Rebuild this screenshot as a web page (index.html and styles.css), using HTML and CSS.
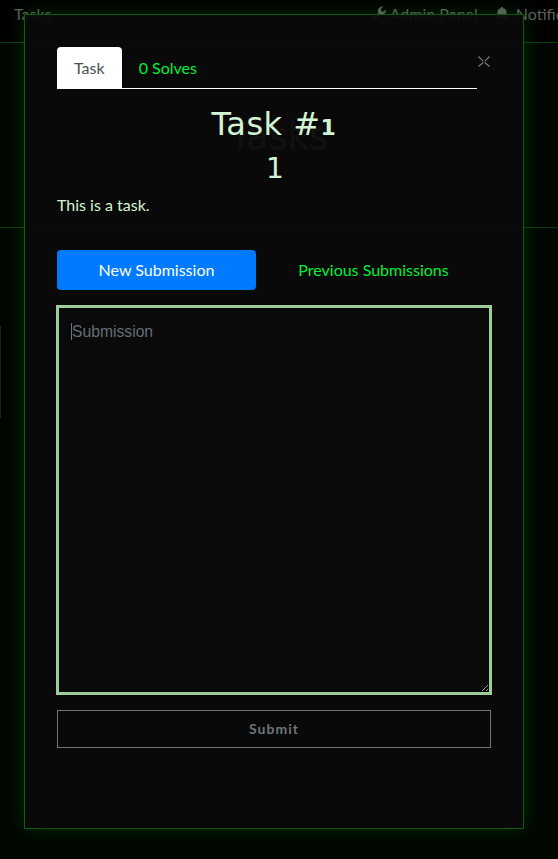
FILE: index.html
```html
<!DOCTYPE html>
<html lang="en">
<head>
    <meta charset="UTF-8">
    <title>Tasks</title>
    <link rel="stylesheet" href="styles.css">
</head>
<body>

    <nav class="navbar">
        <span class="nav-brand">Tasks</span>
        <span class="nav-links">
            <span class="nav-link">
                <svg class="nav-icon" viewBox="0 0 16 16"><path d="M15 4.500a4.200 4.200 0 0 1-5.600 4L4 14.600a1.700 1.700 0 0 1-2.600-2.300L7.400 6.700A4.200 4.200 0 0 1 12.200.700L9.800 3.200l.5 2.100 2.100.5 2.400-2.500z"/></svg>
                Admin Panel
            </span>
            <span class="nav-link">
                <svg class="nav-icon" viewBox="0 0 16 16"><path d="M8 1a1.200 1.200 0 0 1 1.200 1.200A4.500 4.500 0 0 1 12.600 6.700c0 3.600 1.400 4.800 1.900 5.500H1.500c.5-.7 1.900-1.900 1.900-5.500a4.500 4.500 0 0 1 3.400-4.500A1.200 1.200 0 0 1 8 1zM6.300 13.200h3.400a1.700 1.700 0 0 1-3.400 0z"/></svg>
                Notifications
            </span>
        </span>
    </nav>

    <header class="jumbotron">
        <h1>Tasks</h1>
    </header>

    <main class="task-list">
        <div class="task-card"></div>
    </main>

    <div class="modal-content">
        <div class="tab-row">
            <ul class="nav-tabs">
                <li class="tab active">Task</li>
                <li class="tab">0 Solves</li>
            </ul>
            <button class="close" aria-label="Close">
                <svg viewBox="0 0 14 14"><path d="M1.500 1.500l4.800 4.800M12.500 1.500L7.700 6.300M1.500 11.500l4.800-4M12.500 11.500l-4.800-4"/></svg>
            </button>
        </div>

        <h3 class="task-name">Task #<span class="task-num">1</span></h3>
        <h4 class="task-value">1</h4>
        <p class="task-desc">This is a task.</p>

        <div class="sub-tabs">
            <span class="pill active">New Submission</span>
            <span class="pill">Previous Submissions</span>
        </div>

        <form class="submit-form">
            <textarea placeholder="Submission"></textarea>
            <span class="caret"></span>
            <button type="button" class="submit-btn">Submit</button>
        </form>
    </div>

</body>
</html>
```

FILE: styles.css
```css
html, body {
    height: 100%;
}

body {
    margin: 0;
    height: 859px;
    overflow: hidden;
    position: relative;
    font-family: Lato, sans-serif;
    color: #444;
    background: #000;
}

.navbar {
    height: 43px;
    border-bottom: 1px solid #0b3d0b;
    padding: 4px 0 0 14px;
    box-sizing: border-box;
    display: flex;
    justify-content: space-between;
    white-space: nowrap;
    overflow: hidden;
    font-size: 16px;
    color: #5a625a;
    background: #000;
}

.nav-links {
    display: flex;
    gap: 16px;
    margin-right: -48px;
}

.nav-link {
    display: flex;
    align-items: flex-start;
    gap: 3px;
}

.nav-link + .nav-link {
    gap: 6px;
}

.nav-icon {
    width: 16px;
    height: 16px;
    margin-top: 2px;
    fill: #5a625a;
}

.jumbotron {
    height: 185px;
    border-bottom: 1px solid #0b3d0b;
    box-sizing: border-box;
    background: #010601;
}

.jumbotron h1 {
    margin: 0;
    padding-top: 72px;
    text-align: center;
    font-family: "DejaVu Sans", sans-serif;
    font-weight: 400;
    font-size: 37px;
    color: #707070;
}

.task-list {
    padding-top: 98px;
    background: #010601;
    height: 631px;
    box-sizing: border-box;
}

.task-card {
    width: 1px;
    height: 92px;
    background: #1c1f1c;
}

/* modal sits over the dimmed page */
.modal-content {
    position: absolute;
    left: 24px;
    top: 14px;
    width: 500px;
    height: 815px;
    box-sizing: border-box;
    padding: 32px 32px 0;
    background: rgba(10, 10, 10, 0.93);
    border: 1px solid #0d5c0d;
    box-shadow: 0 0 20px rgba(0, 128, 0, 0.3);
}

.tab-row {
    position: relative;
    width: 420px;
}

.nav-tabs {
    list-style: none;
    margin: 0;
    padding: 0;
    display: flex;
    height: 42px;
    box-sizing: border-box;
    border-bottom: 1px solid #fff;
}

.tab {
    padding: 0 17px;
    font-size: 16px;
    line-height: 42px;
    height: 42px;
    box-sizing: border-box;
    color: #00f038;
}

.tab.active {
    background: #fff;
    color: #495057;
    border-radius: 4px 4px 0 0;
}

.close {
    position: absolute;
    right: -14px;
    top: 8px;
    width: 14px;
    height: 14px;
    padding: 0;
    border: none;
    background: none;
}

.close svg {
    display: block;
    fill: none;
    stroke: #7a7a7a;
    stroke-width: 1.200;
}

.task-name {
    margin: 15px 0 0;
    text-align: center;
    font-family: "DejaVu Sans", sans-serif;
    font-weight: 400;
    font-size: 32px;
    line-height: 40px;
    letter-spacing: 0.500px;
    color: #d4f5d4;
    width: 434px;
}

.task-num {
    font-size: 22px;
    font-weight: 700;
}

.task-value {
    margin: 3px 0 0;
    padding-left: 1px;
    text-align: center;
    font-family: "DejaVu Sans", sans-serif;
    font-weight: 400;
    font-size: 28px;
    line-height: 36px;
    color: #d4f5d4;
    width: 434px;
}

.task-desc {
    margin: 6px 0 0;
    font-size: 16px;
    line-height: 24px;
    color: #d4f5d4;
}

.sub-tabs {
    display: flex;
    margin-top: 33px;
    height: 40px;
}

.pill {
    width: 199px;
    font-size: 16px;
    line-height: 40px;
    text-align: center;
    color: #00f038;
    border-radius: 4px;
}

.pill + .pill {
    width: 235px;
}

.pill.active {
    background: #007bff;
    color: #fff;
}

.submit-form {
    position: relative;
    margin-top: 15px;
    width: 434px;
}

textarea {
    display: block;
    box-sizing: border-box;
    width: 436px;
    height: 390px;
    margin-left: -1px;
    padding: 15px 13px;
    background: #0a0a0a;
    border: 3px solid #9ccc9c;
    font-family: "Liberation Sans", sans-serif;
    font-size: 15.700px;
    color: #ddd;
    outline: none;
}

textarea::placeholder {
    color: #666d75;
}

/* text cursor of the focused field */
.caret {
    position: absolute;
    left: 14px;
    top: 18px;
    width: 1px;
    height: 17px;
    background: #6c757d;
}

.submit-btn {
    display: block;
    width: 100%;
    height: 38px;
    margin-top: 15px;
    padding: 0 0 2px;
    background: none;
    border: 1px solid #6c757d;
    font-family: Lato, sans-serif;
    font-size: 14px;
    font-weight: 700;
    letter-spacing: 1px;
    color: #6c757d;
}
```
